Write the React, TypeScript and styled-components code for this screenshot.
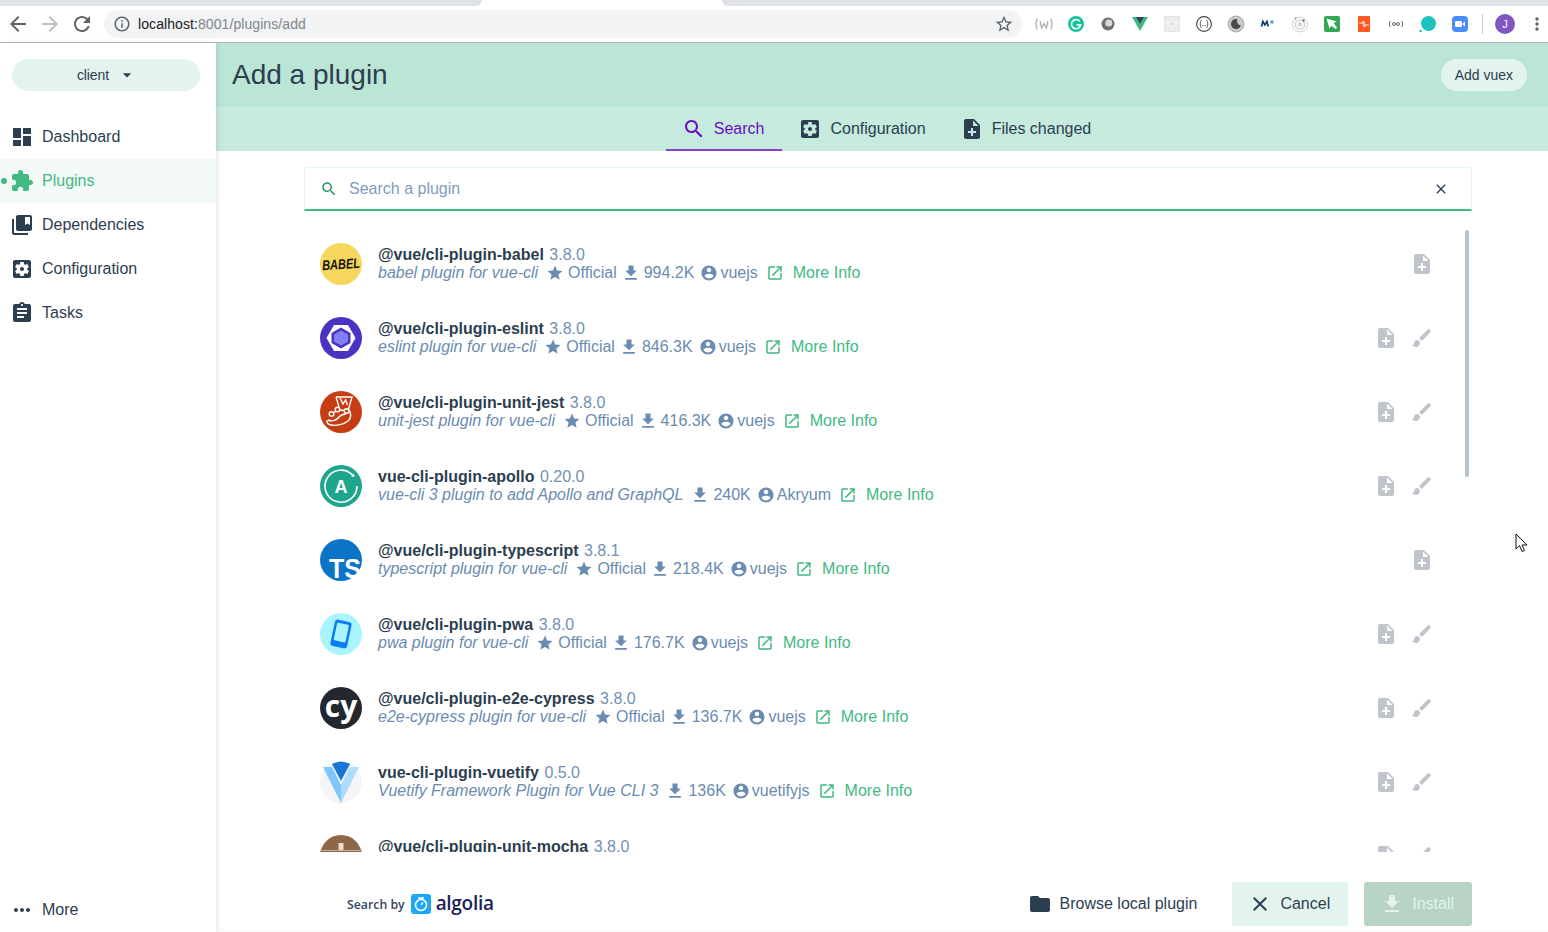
import React from "react";
import styled, { createGlobalStyle } from "styled-components";

const GlobalStyle = createGlobalStyle`
  html, body {
    margin: 0;
    padding: 0;
    height: 100%;
    overflow: hidden;
    background: #fff;
    font-family: "Liberation Sans", Arial, sans-serif;
    color: #2c3e50;
  }
  * { box-sizing: border-box; }
`;

const ICONS = {
  back: "M20 11H7.83l5.59-5.59L12 4l-8 8 8 8 1.41-1.41L7.83 13H20v-2z",
  refresh:
    "M17.65 6.35C16.2 4.9 14.21 4 12 4c-4.42 0-7.99 3.58-7.99 8s3.57 8 7.99 8c3.73 0 6.84-2.55 7.73-6h-2.08c-.82 2.33-3.04 4-5.65 4-3.31 0-6-2.69-6-6s2.69-6 6-6c1.66 0 3.14.69 4.22 1.78L13 11h7V4l-2.35 2.35z",
  info: "M11 7h2v2h-2zm0 4h2v6h-2zm1-9C6.48 2 2 6.48 2 12s4.48 10 10 10 10-4.48 10-10S17.52 2 12 2zm0 18c-4.41 0-8-3.59-8-8s3.59-8 8-8 8 3.59 8 8-3.59 8-8 8z",
  starOutline:
    "M22 9.24l-7.19-.62L12 2 9.19 8.63 2 9.24l5.46 4.73L5.82 21 12 17.27 18.18 21l-1.63-7.03L22 9.24zM12 15.4l-3.76 2.27 1-4.28-3.32-2.88 4.38-.38L12 6.1l1.71 4.04 4.38.38-3.32 2.88 1 4.28L12 15.4z",
  star: "M12 17.27L18.18 21l-1.64-7.03L22 9.24l-7.19-.61L12 2 9.19 8.63 2 9.24l5.46 4.73L5.82 21z",
  dashboard: "M3 13h8V3H3v10zm0 8h8v-6H3v6zm10 0h8V11h-8v10zm0-18v6h8V3h-8z",
  extension:
    "M20.5 11H19V7c0-1.1-.9-2-2-2h-4V3.5C13 2.12 11.88 1 10.5 1S8 2.12 8 3.5V5H4c-1.1 0-1.99.9-1.99 2v3.8H3.5c1.49 0 2.7 1.21 2.7 2.7s-1.21 2.7-2.7 2.7H2V20c0 1.1.9 2 2 2h3.8v-1.5c0-1.49 1.21-2.7 2.7-2.7 1.49 0 2.7 1.21 2.7 2.7V22H17c1.1 0 2-.9 2-2v-4h1.5c1.38 0 2.5-1.12 2.5-2.5S21.88 11 20.5 11z",
  bookmarks:
    "M4 6H2v14c0 1.1.9 2 2 2h14v-2H4V6zm16-4H8c-1.1 0-2 .9-2 2v12c0 1.1.9 2 2 2h12c1.1 0 2-.9 2-2V4c0-1.1-.9-2-2-2zm0 10l-2.5-1.5L15 12V4h5v8z",
  settings:
    "M12 10c-1.1 0-2 .9-2 2s.9 2 2 2 2-.9 2-2-.9-2-2-2zm7-7H5c-1.11 0-2 .9-2 2v14c0 1.1.89 2 2 2h14c1.11 0 2-.9 2-2V5c0-1.1-.89-2-2-2zm-1.75 9c0 .23-.02.46-.05.68l1.48 1.16c.13.11.17.3.08.45l-1.4 2.42c-.09.15-.27.21-.43.15l-1.74-.7c-.36.28-.76.51-1.18.69l-.26 1.85c-.03.17-.18.3-.35.3h-2.8c-.17 0-.32-.13-.35-.29l-.26-1.85c-.43-.18-.82-.41-1.18-.69l-1.74.7c-.16.06-.34 0-.43-.15l-1.4-2.42c-.09-.15-.05-.34.08-.45l1.48-1.16c-.03-.23-.05-.46-.05-.69 0-.23.02-.46.05-.68l-1.48-1.16c-.13-.11-.17-.3-.08-.45l1.4-2.42c.09-.15.27-.21.43-.15l1.74.7c.36-.28.76-.51 1.18-.69l.26-1.85c.03-.17.18-.3.35-.3h2.8c.17 0 .32.13.35.29l.26 1.85c.43.18.82.41 1.18.69l1.74-.7c.16-.06.34 0 .43.15l1.4 2.42c.09.15.05.34-.08.45l-1.48 1.16c.03.23.05.46.05.69z",
  assignment:
    "M19 3h-4.18C14.4 1.84 13.3 1 12 1c-1.3 0-2.4.84-2.82 2H5c-1.1 0-2 .9-2 2v14c0 1.1.9 2 2 2h14c1.1 0 2-.9 2-2V5c0-1.1-.9-2-2-2zm-7 0c.55 0 1 .45 1 1s-.45 1-1 1-1-.45-1-1 .45-1 1-1zm2 14H7v-2h7v2zm3-4H7v-2h10v2zm0-4H7V7h10v2z",
  noteAdd:
    "M14 2H6c-1.1 0-1.99.9-1.99 2L4 20c0 1.1.89 2 1.99 2H18c1.1 0 2-.9 2-2V8l-6-6zm2 14h-3v3h-2v-3H8v-2h3v-3h2v3h3v2zm-3-7V3.5L18.5 9H13z",
  brush:
    "M7 14c-1.66 0-3 1.34-3 3 0 1.31-1.16 2-2 2 .92 1.22 2.49 2 4 2 2.21 0 4-1.79 4-4 0-1.66-1.34-3-3-3zm13.71-9.37l-1.34-1.34c-.39-.39-1.02-.39-1.41 0L9 12.25 11.75 15l8.96-8.96c.39-.39.39-1.02 0-1.41z",
  search:
    "M15.5 14h-.79l-.28-.27C15.41 12.59 16 11.11 16 9.5 16 5.91 13.09 3 9.5 3S3 5.91 3 9.5 5.91 16 9.5 16c1.61 0 3.09-.59 4.23-1.57l.27.28v.79l5 4.99L20.49 19l-4.99-5zm-6 0C7.01 14 5 11.99 5 9.5S7.01 5 9.5 5 14 7.01 14 9.5 11.99 14 9.5 14z",
  download: "M19 9h-4V3H9v6H5l7 7 7-7zM5 18v2h14v-2H5z",
  account:
    "M12 2C6.48 2 2 6.48 2 12s4.48 10 10 10 10-4.48 10-10S17.52 2 12 2zm0 3c1.66 0 3 1.34 3 3s-1.34 3-3 3-3-1.34-3-3 1.34-3 3-3zm0 14.2c-2.5 0-4.71-1.28-6-3.22.03-1.99 4-3.08 6-3.08 1.99 0 5.97 1.09 6 3.08-1.29 1.94-3.5 3.22-6 3.22z",
  openInNew:
    "M19 19H5V5h7V3H5c-1.11 0-2 .9-2 2v14c0 1.1.89 2 2 2h14c1.1 0 2-.9 2-2v-7h-2v7zM14 3v2h3.59l-9.83 9.83 1.41 1.41L19 6.41V10h2V3h-7z",
  close:
    "M19 6.41L17.59 5 12 10.59 6.41 5 5 6.41 10.59 12 5 17.59 6.41 19 12 13.41 17.59 19 19 17.59 13.41 12z",
  folder:
    "M10 4H4c-1.1 0-1.99.9-1.99 2L2 18c0 1.1.9 2 2 2h16c1.1 0 2-.9 2-2V8c0-1.1-.9-2-2-2h-8l-2-2z",
  more: "M6 10c-1.1 0-2 .9-2 2s.9 2 2 2 2-.9 2-2-.9-2-2-2zm12 0c-1.1 0-2 .9-2 2s.9 2 2 2 2-.9 2-2-.9-2-2-2zm-6 0c-1.1 0-2 .9-2 2s.9 2 2 2 2-.9 2-2-.9-2-2-2z",
  kebab:
    "M12 8c1.1 0 2-.9 2-2s-.9-2-2-2-2 .9-2 2 .9 2 2 2zm0 2c-1.1 0-2 .9-2 2s.9 2 2 2 2-.9 2-2-.9-2-2-2zm0 6c-1.1 0-2 .9-2 2s.9 2 2 2 2-.9 2-2-.9-2-2-2z",
  caret: "M7 10l5 5 5-5z",
};

const IconSvg = styled.svg<{ $size: number; $color: string }>`
  width: ${(p) => p.$size}px;
  height: ${(p) => p.$size}px;
  flex: none;
  display: block;
  fill: ${(p) => p.$color};
`;

interface IconProps {
  name: keyof typeof ICONS;
  size?: number;
  color?: string;
}

const Icon: React.FC<IconProps> = ({ name, size = 24, color = "#2c3e50" }) => (
  <IconSvg viewBox="0 0 24 24" $size={size} $color={color}>
    <path d={ICONS[name]} />
  </IconSvg>
);

const Page = styled.div`
  position: relative;
  width: 1548px;
  height: 932px;
  display: flex;
  flex-direction: column;
  overflow: hidden;
`;

/* browser chrome */
const TabStrip = styled.div`
  height: 6px;
  display: flex;
  flex: none;
`;

const StripTab = styled.div<{ $side: "left" | "right" }>`
  background: #dee1e6;
  width: ${(p) => (p.$side === "left" ? "482px" : "826px")};
  margin-left: ${(p) => (p.$side === "right" ? "240px" : "0")};
  border-bottom-right-radius: ${(p) => (p.$side === "left" ? "6px" : "0")};
  border-bottom-left-radius: ${(p) => (p.$side === "right" ? "6px" : "0")};
`;

const Toolbar = styled.div`
  height: 37px;
  flex: none;
  display: flex;
  align-items: center;
  padding: 4px 0 4px 6px;
  background: #fff;
  border-bottom: 1px solid #b4b4b4;
`;

const NavButton = styled.div`
  width: 24px;
  height: 24px;
  margin-right: 8px;
  flex: none;
`;

const UrlBar = styled.div`
  width: 918px;
  height: 28px;
  margin-left: 2px;
  border-radius: 14px;
  background: #f1f3f4;
  display: flex;
  align-items: center;
  padding: 0 8px 0 9px;
  font-size: 14px;
  letter-spacing: 0.08px;
`;

const UrlHost = styled.span`
  margin-left: 7px;
  color: #202124;
`;

const UrlPath = styled.span`
  color: #80868b;
  flex: 1;
`;

const Extensions = styled.div`
  display: flex;
  align-items: center;
  gap: 14px;
  margin-left: 13px;
`;

const ExtSvg = styled.svg`
  width: 18px;
  height: 18px;
  flex: none;
  display: block;
`;

const ExtDivider = styled.div`
  width: 1px;
  height: 20px;
  background: #c9ccd0;
  margin-left: 13px;
`;

const Profile = styled.div`
  width: 20px;
  height: 20px;
  margin-left: 12px;
  border-radius: 50%;
  background: #7e57c2;
  color: #fff;
  font-size: 11px;
  display: flex;
  align-items: center;
  justify-content: center;
  flex: none;
`;

const Kebab = styled.div`
  width: 20px;
  height: 20px;
  margin-left: 12px;
  flex: none;
`;

/* app layout */
const Body = styled.div`
  flex: 1;
  min-height: 0;
  display: flex;
`;

const Sidebar = styled.aside`
  width: 216px;
  flex: none;
  display: flex;
  flex-direction: column;
  padding-top: 16px;
  background: #fff;
  box-shadow: 2px 0 5px rgba(0, 0, 0, 0.09);
  position: relative;
  z-index: 1;
`;

const ProjectSelect = styled.div`
  height: 32px;
  margin: 0 16px 24px 12px;
  padding-left: 2px;
  border-radius: 16px;
  background: #e3f4ee;
  display: flex;
  align-items: center;
  justify-content: center;
  font-size: 14px;
  letter-spacing: -0.1px;
  gap: 8px;
`;

const NavList = styled.nav`
  display: flex;
  flex-direction: column;
  flex: 1;
`;

const NavItem = styled.div<{ $active?: boolean }>`
  position: relative;
  height: 44px;
  display: flex;
  align-items: center;
  gap: 8px;
  padding-left: 10px;
  font-size: 16px;
  color: ${(p) => (p.$active ? "#42b983" : "#2c3e50")};
  background: ${(p) => (p.$active ? "#f3faf7" : "transparent")};
`;

const ActiveDot = styled.span`
  position: absolute;
  left: 1px;
  top: 19px;
  width: 6px;
  height: 6px;
  border-radius: 50%;
  background: #42b983;
`;

const SidebarMore = styled.div`
  height: 44px;
  display: flex;
  align-items: center;
  gap: 8px;
  padding-left: 10px;
  font-size: 16px;
`;

const Main = styled.main`
  flex: 1;
  min-width: 0;
  display: flex;
  flex-direction: column;
`;

const Header = styled.header`
  height: 64px;
  flex: none;
  background: #bbe5d5;
  display: flex;
  align-items: center;
  justify-content: space-between;
  padding: 0 21px 0 16px;
`;

const Title = styled.h1`
  margin: 0;
  font-size: 28px;
  font-weight: 400;
  color: #2c3e50;
`;

const PillButton = styled.div`
  height: 32px;
  padding: 0 14px;
  border-radius: 16px;
  background: #e3f4ee;
  display: flex;
  align-items: center;
  font-size: 14px;
`;

const TabsBar = styled.div`
  height: 44px;
  flex: none;
  background: #c6eadd;
  display: flex;
  justify-content: center;
  padding-left: 11px;
`;

const Tab = styled.div<{ $active?: boolean }>`
  display: flex;
  align-items: center;
  gap: 8px;
  padding: 2px 18px 0 16px;
  font-size: 16px;
  color: ${(p) => (p.$active ? "#6a0dc4" : "#2c3e50")};
  border-bottom: 2px solid ${(p) => (p.$active ? "#8a3fcc" : "transparent")};
`;

const Content = styled.div`
  flex: 1;
  min-height: 0;
  display: flex;
  flex-direction: column;
  padding: 16px 76px 0 88px;
`;

const SearchBox = styled.div`
  height: 44px;
  flex: none;
  display: flex;
  align-items: center;
  gap: 11px;
  padding: 0 22px 0 15px;
  border: 1px solid #e3f4ee;
  border-bottom: 2px solid #42b983;
  border-radius: 3px 3px 0 0;
`;

const SearchPlaceholder = styled.span`
  flex: 1;
  font-size: 16px;
  color: #7f9cc0;
`;

const ListViewport = styled.div`
  position: relative;
  flex: 1;
  min-height: 0;
  padding-top: 16px;
  overflow: hidden;
`;

const ScrollThumb = styled.div`
  position: absolute;
  top: 19px;
  right: 3px;
  width: 4px;
  height: 247px;
  border-radius: 2px;
  background: #b3c6d0;
`;

const Row = styled.div`
  height: 74px;
  display: flex;
  align-items: center;
  padding: 0 32px 0 16px;
`;

const Avatar = styled.div`
  width: 42px;
  height: 42px;
  flex: none;
  margin-right: 16px;
`;

const AvatarSvg = styled.svg`
  width: 42px;
  height: 42px;
  display: block;
`;

const RowText = styled.div`
  flex: 1;
  min-width: 0;
  line-height: 18px;
  font-size: 16px;
`;

const NameLine = styled.div`
  display: flex;
  gap: 5.5px;
`;

const Name = styled.span`
  font-weight: 700;
  color: #2c3e50;
`;

const Version = styled.span`
  color: #7390b3;
`;

const MetaLine = styled.div`
  display: flex;
  align-items: center;
  height: 18px;
  color: #6a8bb2;
`;

const Description = styled.span<{ $official: boolean }>`
  font-style: italic;
  margin-right: ${(p) => (p.$official ? "8px" : "7px")};
`;

const OfficialText = styled.span`
  margin: 0 4px;
`;

const DownloadCount = styled.span`
  margin: 0 6px 0 3px;
`;

const Author = styled.span`
  margin: 0 8px 0 2px;
`;

const MoreInfo = styled.span`
  margin-left: 9px;
  color: #42b983;
`;

const RowAction = styled.div`
  width: 36px;
  height: 24px;
  display: flex;
  justify-content: center;
  flex: none;
`;

const Footer = styled.footer`
  height: 80px;
  flex: none;
  display: flex;
  align-items: center;
  padding: 24px 76px 0 131px;
  background: #fff;
  box-shadow: inset 0 -2px 0 #fafafa;
`;

const Attribution = styled.div`
  display: flex;
  align-items: center;
  flex: 1;
  gap: 6px;
`;

const SearchBy = styled.span`
  font-family: "Open Sans", sans-serif;
  font-size: 12.3px;
  font-weight: 600;
  color: #33425f;
`;

const AlgoliaMark = styled.svg`
  width: 20px;
  height: 20px;
  display: block;
`;

const AlgoliaWord = styled.span`
  font-family: "Open Sans", sans-serif;
  font-size: 19px;
  font-weight: 600;
  color: #182359;
  margin: 0 0 3px -1px;
  letter-spacing: -0.3px;
`;

const BrowseLink = styled.div`
  display: flex;
  align-items: center;
  gap: 8px;
  font-size: 16px;
  margin-right: 35px;
`;

const FooterButton = styled.div<{ $primary?: boolean }>`
  height: 44px;
  padding: 0 18px 0 16px;
  margin-left: ${(p) => (p.$primary ? "16px" : "0")};
  display: flex;
  align-items: center;
  gap: 8px;
  border-radius: 3px;
  font-size: 16px;
  background: ${(p) => (p.$primary ? "#b7d4c5" : "#e3f4ee")};
  color: ${(p) => (p.$primary ? "#e6f3ec" : "#2c3e50")};
`;

const Cursor = styled.svg`
  position: absolute;
  left: 1515px;
  top: 533px;
  width: 13px;
  height: 20px;
`;

const extensions: React.ReactNode[] = [
  <g fill="none" stroke="#a9a9a9" strokeWidth="1.2">
    <path d="M2.5 3.500c-2 3.500-2 7.500 0 11M15.500 3.500c2 3.500 2 7.500 0 11" />
    <path d="M5 6l1.600 7 2.400-4.500 2.400 4.500 1.600-7" />
  </g>,
  <g>
    <circle cx="9" cy="9" r="8" fill="#15c39a" />
    <path d="M12.6 6.2A4.6 4.6 0 1 0 13.6 9.8H9.6" fill="none" stroke="#fff" strokeWidth="1.7" />
  </g>,
  <g>
    <circle cx="9" cy="9" r="6.5" fill="#6f6f6f" />
    <circle cx="9.8" cy="8" r="3.6" fill="#d9d9d9" />
  </g>,
  <g>
    <path d="M1 2h16L9 16z" fill="#41b883" />
    <path d="M5 2h8L9 9z" fill="#35495e" />
  </g>,
  <g>
    <rect x="1" y="1" width="16" height="16" fill="#e6e6e6" />
    <g fill="none" stroke="#f6f6f6" strokeWidth="0.9">
      <ellipse cx="9" cy="9" rx="7" ry="2.8" />
      <ellipse cx="9" cy="9" rx="7" ry="2.8" transform="rotate(60 9 9)" />
      <ellipse cx="9" cy="9" rx="7" ry="2.8" transform="rotate(120 9 9)" />
    </g>
  </g>,
  <g>
    <circle cx="9" cy="9" r="7.4" fill="none" stroke="#444" strokeWidth="1.1" />
    <path d="M6.500 5.500c-1 0-1 1-1 1.800S5.500 9 4.800 9c.7 0 .7.900.7 1.700s0 1.800 1 1.800M11.500 5.500c1 0 1 1 1 1.800s0 1.700.7 1.700c-.7 0-.7.900-.7 1.700s0 1.800-1 1.800" fill="none" stroke="#444" strokeWidth="0.9" />
    <path d="M7.600 10.500h.6M8.800 10.500h.6M10 10.500h.6" stroke="#444" />
  </g>,
  <g>
    <circle cx="9" cy="9" r="8" fill="#c9c9c9" stroke="#8c8c8c" strokeWidth="0.6" />
    <path d="M10.400 4.200A5 5 0 1 0 13.800 10.400 4.400 4.400 0 0 1 10.400 4.200z" fill="#4a4a4a" />
  </g>,
  <g>
    <path d="M2.500 11.500l1.400-5 2 3.400 2-3.400 1.400 5" fill="none" stroke="#0b3f73" strokeWidth="1.700" />
    <path d="M11 7h4M13 5v4" stroke="#2f8fbf" strokeWidth="1.200" />
  </g>,
  <g fill="none" stroke="#cfcfcf">
    <circle cx="9" cy="9.500" r="7.400" />
    <circle cx="9" cy="9.500" r="4.600" strokeWidth="1.400" />
    <circle cx="9" cy="9.500" r="1.800" fill="#d8d8d8" />
    <circle cx="12.500" cy="5.500" r="1.200" fill="#777" stroke="none" />
    <circle cx="4.500" cy="3.500" r="1" fill="#999" stroke="none" />
  </g>,
  <g>
    <rect x="1" y="1" width="16" height="16" rx="2" fill="#34a853" />
    <path d="M3.500 3.500l10 3-2.800 1.800 3.300 4.200-1.500 1.500-4.200-3.300L6.500 13.500z" fill="#fff" />
  </g>,
  <g>
    <rect x="3" y="1" width="12" height="16" rx="1" fill="#ff5a24" />
    <path d="M4.500 8h5l-1.500-2M13.500 10h-5l1.500 2" fill="none" stroke="#fff" strokeWidth="1.200" />
  </g>,
  <g fill="none" stroke="#666" strokeWidth="1">
    <path d="M3.200 6c-1 2-1 4 0 6M14.800 6c1 2 1 4 0 6" />
    <circle cx="7" cy="9" r="1.500" />
    <circle cx="11" cy="9" r="1.500" />
  </g>,
  <g>
    <circle cx="9.500" cy="8.500" r="7.500" fill="#1cc2c2" />
    <circle cx="1.600" cy="16" r="1.200" fill="#1cc2c2" />
  </g>,
  <g>
    <rect x="1" y="1" width="16" height="16" rx="4" fill="#4a8cff" />
    <rect x="4" y="6" width="7" height="6" rx="1.200" fill="#fff" />
    <path d="M11.600 8.400L14 6.600v4.800l-2.400-1.800z" fill="#fff" />
  </g>,
];

const avatars: Record<string, React.ReactNode> = {
  babel: (
    <>
      <circle cx="21" cy="21" r="21" fill="#f5d75e" />
      <text x="2" y="26" transform="rotate(-4 21 21)" fontFamily="Liberation Sans, sans-serif" fontSize="14" fontStyle="italic" fontWeight="700" textLength="38" lengthAdjust="spacingAndGlyphs" fill="#16150f">
        BABEL
      </text>
    </>
  ),
  eslint: (
    <>
      <circle cx="21" cy="21" r="21" fill="#4b32c3" />
      <path d="M6.500 21L14 8h14l7.500 13L28 34H14z" fill="#fff" />
      <path d="M21 10.500l9.500 5.500v10L21 31.500 11.500 26V16z" fill="#4b32c3" />
      <path d="M21 13.500l7 4v7l-7 4-7-4v-7z" fill="#8080f2" />
    </>
  ),
  jest: (
    <>
      <circle cx="21" cy="21" r="21" fill="#c63d14" />
      <g fill="none" stroke="#fff" strokeWidth="1.400">
        <path d="M16 6h16l-3.500 12c3 4 3 9-.5 12-4 3.500-12 5-17 4-3-.5-4.500-2.500-4-5" />
        <path d="M16 6l3 10M20 7l3 6 2.500-4 2 5" />
        <circle cx="11.500" cy="23" r="2.300" />
        <circle cx="17.500" cy="18.500" r="2.300" />
        <circle cx="26.500" cy="20" r="2.300" />
        <path d="M13.500 22l2.300-2M20 19l4 .5M8 29c4 2 9 0 11-3 2-2 5-3 7-3" />
      </g>
    </>
  ),
  apollo: (
    <>
      <circle cx="21" cy="21" r="21" fill="#1fa58d" />
      <path d="M32.500 10A16 16 0 1 0 37 21" fill="none" stroke="#fff" strokeWidth="1.600" />
      <circle cx="33" cy="10.500" r="1.500" fill="#fff" />
      <text x="21" y="27.500" fontFamily="Liberation Sans, sans-serif" fontSize="18" fontWeight="700" textAnchor="middle" fill="#fff">
        A
      </text>
    </>
  ),
  typescript: (
    <>
      <circle cx="21" cy="21" r="21" fill="#0b74c9" />
      <text x="9" y="39" fontFamily="Liberation Sans, sans-serif" fontSize="27" fontWeight="700" textLength="32" lengthAdjust="spacingAndGlyphs" fill="#fff">
        TS
      </text>
    </>
  ),
  pwa: (
    <>
      <circle cx="21" cy="21" r="21" fill="#a9f4ff" />
      <g transform="rotate(12 21 21)">
        <rect x="12.500" y="7.500" width="17" height="27" rx="3" fill="#0b7cf2" />
        <rect x="15" y="10.500" width="12" height="18" rx="1" fill="#a9f4ff" />
      </g>
    </>
  ),
  cypress: (
    <>
      <circle cx="21" cy="21" r="21" fill="#23272e" />
      <text x="21" y="30" fontFamily="Open Sans, sans-serif" fontSize="30" fontWeight="700" textAnchor="middle" fill="#fff">
        cy
      </text>
    </>
  ),
  vuetify: (
    <>
      <circle cx="21" cy="21" r="21" fill="#f5f5f5" />
      <path d="M3 6h9l9 18v18z" fill="#7fc6ff" />
      <path d="M39 6h-9l-9 18v18z" fill="#aedcff" />
      <path d="M12 3q9-5 18 0L21 20z" fill="#1976d2" />
    </>
  ),
  mocha: (
    <>
      <circle cx="21" cy="21" r="21" fill="#8d6748" />
      <rect x="18.500" y="8" width="5" height="7" fill="#e8dccb" />
      <rect x="0" y="15" width="42" height="1" fill="#c6b09a" />
    </>
  ),
};

interface Plugin {
  logo: keyof typeof avatars;
  name: string;
  version: string;
  description: string;
  official: boolean;
  downloads: string;
  author: string;
  invokable: boolean;
}

const plugins: Plugin[] = [
  { logo: "babel", name: "@vue/cli-plugin-babel", version: "3.8.0", description: "babel plugin for vue-cli", official: true, downloads: "994.2K", author: "vuejs", invokable: false },
  { logo: "eslint", name: "@vue/cli-plugin-eslint", version: "3.8.0", description: "eslint plugin for vue-cli", official: true, downloads: "846.3K", author: "vuejs", invokable: true },
  { logo: "jest", name: "@vue/cli-plugin-unit-jest", version: "3.8.0", description: "unit-jest plugin for vue-cli", official: true, downloads: "416.3K", author: "vuejs", invokable: true },
  { logo: "apollo", name: "vue-cli-plugin-apollo", version: "0.20.0", description: "vue-cli 3 plugin to add Apollo and GraphQL", official: false, downloads: "240K", author: "Akryum", invokable: true },
  { logo: "typescript", name: "@vue/cli-plugin-typescript", version: "3.8.1", description: "typescript plugin for vue-cli", official: true, downloads: "218.4K", author: "vuejs", invokable: false },
  { logo: "pwa", name: "@vue/cli-plugin-pwa", version: "3.8.0", description: "pwa plugin for vue-cli", official: true, downloads: "176.7K", author: "vuejs", invokable: true },
  { logo: "cypress", name: "@vue/cli-plugin-e2e-cypress", version: "3.8.0", description: "e2e-cypress plugin for vue-cli", official: true, downloads: "136.7K", author: "vuejs", invokable: true },
  { logo: "vuetify", name: "vue-cli-plugin-vuetify", version: "0.5.0", description: "Vuetify Framework Plugin for Vue CLI 3", official: false, downloads: "136K", author: "vuetifyjs", invokable: true },
  { logo: "mocha", name: "@vue/cli-plugin-unit-mocha", version: "3.8.0", description: "unit-mocha plugin for vue-cli", official: true, downloads: "120.1K", author: "vuejs", invokable: true },
];

const navItems: { label: string; icon: keyof typeof ICONS; active?: boolean }[] = [
  { label: "Dashboard", icon: "dashboard" },
  { label: "Plugins", icon: "extension", active: true },
  { label: "Dependencies", icon: "bookmarks" },
  { label: "Configuration", icon: "settings" },
  { label: "Tasks", icon: "assignment" },
];

const META = "#6a8bb2";
const MUTED = "#c0c4cc";

const PluginRow: React.FC<{ plugin: Plugin }> = ({ plugin }) => (
  <Row>
    <Avatar>
      <AvatarSvg viewBox="0 0 42 42">{avatars[plugin.logo]}</AvatarSvg>
    </Avatar>
    <RowText>
      <NameLine>
        <Name>{plugin.name}</Name>
        <Version>{plugin.version}</Version>
      </NameLine>
      <MetaLine>
        <Description $official={plugin.official}>{plugin.description}</Description>
        {plugin.official && (
          <>
            <Icon name="star" size={18} color={META} />
            <OfficialText>Official</OfficialText>
          </>
        )}
        <Icon name="download" size={20} color={META} />
        <DownloadCount>{plugin.downloads}</DownloadCount>
        <Icon name="account" size={18} color={META} />
        <Author>{plugin.author}</Author>
        <Icon name="openInNew" size={18} color="#42b983" />
        <MoreInfo>More Info</MoreInfo>
      </MetaLine>
    </RowText>
    {plugin.invokable && (
      <RowAction>
        <Icon name="noteAdd" color={MUTED} />
      </RowAction>
    )}
    <RowAction>
      <Icon name={plugin.invokable ? "brush" : "noteAdd"} color={MUTED} />
    </RowAction>
  </Row>
);

const App: React.FC = () => (
  <Page>
    <GlobalStyle />
    <TabStrip>
      <StripTab $side="left" />
      <StripTab $side="right" />
    </TabStrip>
    <Toolbar>
      <NavButton>
        <Icon name="back" color="#5f6368" />
      </NavButton>
      <NavButton>
        <IconSvg viewBox="0 0 24 24" $size={24} $color="#bcbec1">
          <path d={ICONS.back} transform="matrix(-1 0 0 1 24 0)" />
        </IconSvg>
      </NavButton>
      <NavButton>
        <Icon name="refresh" color="#5f6368" />
      </NavButton>
      <UrlBar>
        <Icon name="info" size={18} color="#5f6368" />
        <UrlHost>localhost:</UrlHost>
        <UrlPath>8001/plugins/add</UrlPath>
        <Icon name="starOutline" size={20} color="#5f6368" />
      </UrlBar>
      <Extensions>
        {extensions.map((ext, i) => (
          <ExtSvg key={i} viewBox="0 0 18 18">
            {ext}
          </ExtSvg>
        ))}
      </Extensions>
      <ExtDivider />
      <Profile>J</Profile>
      <Kebab>
        <Icon name="kebab" size={20} color="#5f6368" />
      </Kebab>
    </Toolbar>
    <Body>
      <Sidebar>
        <ProjectSelect>
          client
          <Icon name="caret" size={20} />
        </ProjectSelect>
        <NavList>
          {navItems.map((item) => (
            <NavItem key={item.label} $active={item.active}>
              {item.active && <ActiveDot />}
              <Icon name={item.icon} color={item.active ? "#42b983" : "#2c3e50"} />
              {item.label}
            </NavItem>
          ))}
        </NavList>
        <SidebarMore>
          <Icon name="more" />
          More
        </SidebarMore>
      </Sidebar>
      <Main>
        <Header>
          <Title>Add a plugin</Title>
          <PillButton>Add vuex</PillButton>
        </Header>
        <TabsBar>
          <Tab $active>
            <Icon name="search" color="#6a0dc4" />
            Search
          </Tab>
          <Tab>
            <Icon name="settings" />
            Configuration
          </Tab>
          <Tab>
            <Icon name="noteAdd" />
            Files changed
          </Tab>
        </TabsBar>
        <Content>
          <SearchBox>
            <Icon name="search" size={18} color="#2f9468" />
            <SearchPlaceholder>Search a plugin</SearchPlaceholder>
            <Icon name="close" size={16} />
          </SearchBox>
          <ListViewport>
            {plugins.map((plugin) => (
              <PluginRow key={plugin.name} plugin={plugin} />
            ))}
            <ScrollThumb />
          </ListViewport>
        </Content>
        <Footer>
          <Attribution>
            <SearchBy>Search by</SearchBy>
            <AlgoliaMark viewBox="0 0 20 20">
              <rect width="20" height="20" rx="3" fill="#1ea7fd" />
              <circle cx="10" cy="11" r="5.500" fill="none" stroke="#fff" strokeWidth="1.500" />
              <path d="M7 4h6M10 11l2-2.500" stroke="#fff" strokeWidth="1.300" fill="none" />
            </AlgoliaMark>
            <AlgoliaWord>algolia</AlgoliaWord>
          </Attribution>
          <BrowseLink>
            <Icon name="folder" />
            Browse local plugin
          </BrowseLink>
          <FooterButton>
            <Icon name="close" />
            Cancel
          </FooterButton>
          <FooterButton $primary>
            <Icon name="download" color="#e6f3ec" />
            Install
          </FooterButton>
        </Footer>
      </Main>
    </Body>
    <Cursor viewBox="0 0 13 20">
      <path d="M1 1v15l3.500-3.500 2.500 6 2.500-1-2.500-5.500h5z" fill="#fff" stroke="#111" strokeWidth="1" />
    </Cursor>
  </Page>
);

export default App;
